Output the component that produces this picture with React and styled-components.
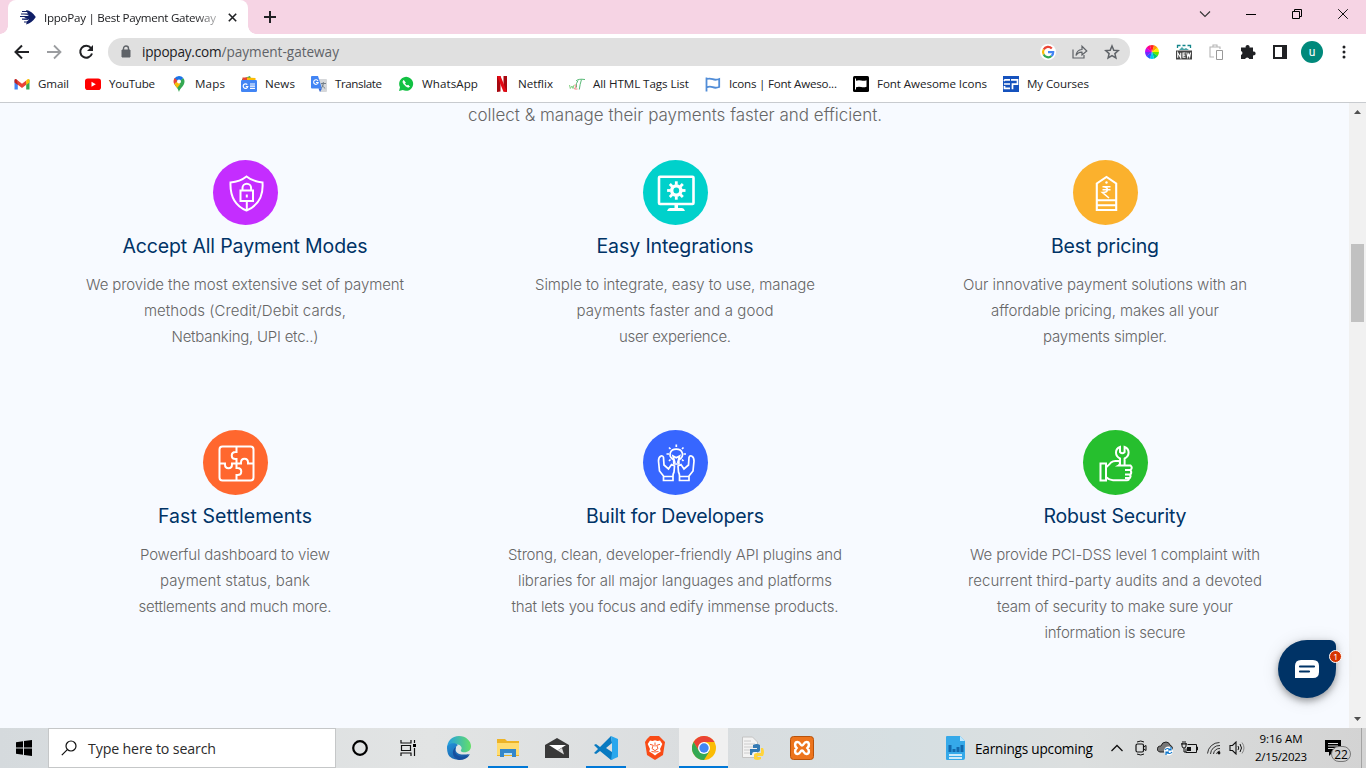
import React, { useLayoutEffect, useRef, useState } from 'react';
import styled, { createGlobalStyle, css } from 'styled-components';

const GlobalStyle = createGlobalStyle`
  * { box-sizing: border-box; }
  body { margin: 0; overflow: hidden; font-family: 'Open Sans', 'Noto Sans', sans-serif; }
  svg { display: block; flex: none; }
`;

/* A single line of text tracked so that it fills a known measure. */
const Line = styled.span`
  display: block;
  width: max-content;
  white-space: pre;
`;
function Fit({ w, children }) {
  const ref = useRef(null);
  const [spacing, setSpacing] = useState(0);
  useLayoutEffect(() => {
    const natural = ref.current.getBoundingClientRect().width;
    setSpacing((w - natural) / (children.length - 1));
  }, [w, children]);
  return <Line ref={ref} style={{ letterSpacing: spacing, marginRight: -spacing }}>{children}</Line>;
}

const Screen = styled.div`
  width: 1366px;
  height: 768px;
  display: flex;
  flex-direction: column;
  background: #fff;
`;

/* ---------- browser chrome ---------- */
const TabStrip = styled.header`
  height: 34px;
  flex: none;
  display: flex;
  background: #f6d4e4;
`;
const Tab = styled.div`
  position: relative;
  width: 240px;
  margin-left: 8px;
  padding: 0 8px 0 12px;
  display: flex;
  align-items: center;
  background: #fff;
  border-radius: 8px 8px 0 0;
  font-size: 11.6px;
  color: #3c4043;
  &::before, &::after {
    content: '';
    position: absolute;
    bottom: 0;
    width: 8px;
    height: 8px;
  }
  &::before { left: -8px; background: radial-gradient(circle at 0 0, transparent 7.5px, #fff 8px); }
  &::after { right: -8px; background: radial-gradient(circle at 100% 0, transparent 7.5px, #fff 8px); }
`;
const TabTitle = styled.div`
  width: 175px;
  flex: none;
  margin-left: 8px;
  overflow: hidden;
  color: #202124;
  mask-image: linear-gradient(90deg, #000 150px, rgba(0, 0, 0, 0.35) 172px);
`;
const TabClose = styled.div`
  width: 16px;
  flex: none;
  margin-left: 5px;
  display: flex;
  justify-content: center;
`;
const NewTab = styled.div`
  width: 44px;
  display: flex;
  align-items: center;
  justify-content: center;
`;
const WindowControls = styled.div`
  margin-left: auto;
  height: 28px;
  display: flex;
`;
const WindowButton = styled.div`
  width: 46px;
  display: flex;
  align-items: center;
  justify-content: center;
`;
const Toolbar = styled.nav`
  height: 35px;
  flex: none;
  padding: 0 6px;
  display: flex;
  align-items: center;
`;
const Slot = styled.div`
  width: 32px;
  height: 32px;
  flex: none;
  display: flex;
  align-items: center;
  justify-content: center;
`;
const Omnibox = styled.div`
  width: 1022px;
  height: 28px;
  margin: 0 6px;
  padding: 0 2px 0 13px;
  display: flex;
  align-items: center;
  border-radius: 14px;
  background: #e0e0e0;
`;
const Url = styled.div`
  display: flex;
  flex: 1;
  margin-left: 11px;
  font-size: 13.6px;
  color: #5f6368;
  b { font-weight: 400; color: #202124; }
`;
const Avatar = styled.div`
  width: 22px;
  height: 22px;
  border-radius: 50%;
  background: #00897b;
  color: #fff;
  font: 12px/22px Roboto, sans-serif;
  text-align: center;
`;
const BookmarksBar = styled.nav`
  height: 34px;
  flex: none;
  padding: 0 14px 4px;
  display: flex;
  align-items: center;
  gap: 16px;
  border-bottom: 1px solid #c8cbcf;
`;
const BookmarkItem = styled.div`
  display: flex;
  align-items: center;
  gap: 8px;
  font-size: 11.6px;
  line-height: 16px;
  color: #202124;
`;

/* ---------- page ---------- */
const Viewport = styled.main`
  position: relative;
  height: 625px;
  flex: none;
  display: flex;
`;
const Page = styled.section`
  width: 1349px;
  padding-left: 1px;
  overflow: hidden;
  background: #f7faff;
  font-family: Inter, 'Open Sans', sans-serif;
  font-weight: 300;
`;
const Intro = styled.div`
  height: 57px;
  display: flex;
  justify-content: center;
  font-size: 17px;
  line-height: 25px;
  color: #666;
`;
const FeatureRow = styled.div`
  width: ${(p) => p.$col * 3}px;
  height: 270px;
  margin: 0 auto;
  margin-left: ${(p) => (1350 - p.$col * 3) / 2 - 1}px;
  display: grid;
  grid-template-columns: repeat(3, 1fr);
`;
const Feature = styled.article`
  display: flex;
  flex-direction: column;
  align-items: center;
  font-size: 15px;
  line-height: 26px;
  color: #666;
`;
const Disc = styled.div`
  width: 65px;
  height: 65px;
  margin-left: 1px;
  display: flex;
  align-items: center;
  justify-content: center;
  border-radius: 50%;
  background: ${(p) => p.$color};
`;
const FeatureTitle = styled.h3`
  margin: 6px 0 11px;
  font-size: 19.5px;
  font-weight: 400;
  line-height: 30px;
  color: #003366;
`;
const Scrollbar = styled.div`
  width: 17px;
  padding: 7px 0 7px;
  display: flex;
  flex-direction: column;
  align-items: center;
  background: #f1f1f1;
`;
const Thumb = styled.div`
  width: 13px;
  height: 78px;
  margin-top: 130px;
  margin-bottom: auto;
  background: #c1c1c1;
`;
const Chat = styled.div`
  position: absolute;
  left: 1278px;
  top: 537px;
  width: 58px;
  height: 58px;
  display: flex;
  align-items: center;
  justify-content: center;
  border-radius: 50% 6px 50% 50%;
  background: #003366;
  box-shadow: 0 3px 7px rgba(0, 0, 0, 0.35), 0 2px 18px rgba(0, 0, 0, 0.12);
`;
const ChatBadge = styled.div`
  position: absolute;
  right: -6px;
  top: 10px;
  width: 13px;
  height: 13px;
  border: 1px solid #fff;
  border-radius: 50%;
  background: #d63500;
  color: #fff;
  font: 8px/12px Inter, sans-serif;
  text-align: center;
`;

/* ---------- taskbar ---------- */
const Taskbar = styled.footer`
  height: 40px;
  flex: none;
  display: flex;
  align-items: center;
  background: linear-gradient(90deg, #d5dadd 0, #e2e4e4 430px, #dadddf 700px, #d6dfe2 900px, #dcdfdf 1080px, #d3d3d3 1366px);
  color: #000;
`;
const TaskSlot = styled.div`
  width: ${(p) => p.$w || 49}px;
  height: 40px;
  flex: none;
  display: flex;
  align-items: center;
  justify-content: center;
  ${(p) => p.$open && css`
    background: linear-gradient(#0078d7, #0078d7) center bottom / ${p.$active ? 49 : 40}px 2px no-repeat
      ${p.$active ? ', #f0f0f0' : ''};
  `}
`;
const SearchBox = styled.div`
  width: 288px;
  height: 40px;
  padding-left: 12px;
  display: flex;
  align-items: center;
  gap: 11px;
  border: 1px solid #c5c7c8;
  background: #fff;
  font-size: 14.2px;
  color: #2b2b2b;
`;
const Apps = styled.div`
  display: flex;
  margin-left: 2px;
`;
const Weather = styled.div`
  margin-left: auto;
  width: 159px;
  display: flex;
  align-items: center;
  gap: 10px;
  font-size: 13.6px;
`;
const Clock = styled.div`
  width: 64px;
  display: flex;
  flex-direction: column;
  align-items: center;
  font-size: 11.5px;
  line-height: 18px;
`;
const Notice = styled.div`
  position: relative;
  width: 49px;
  height: 40px;
  padding: 12px 0 0 12px;
  border-right: 1px solid #a3a3a3;
  margin-right: 4px;
`;
const NoticeCount = styled.div`
  position: absolute;
  left: 18px;
  top: 18px;
  width: 20px;
  height: 16px;
  border: 1px solid #777;
  border-radius: 8px;
  background: #d1d1d1;
  font-size: 12px;
  font-weight: 500;
  line-height: 15px;
  display: flex;
  justify-content: center;
`;

/* ---------- icons ---------- */
const Svg = ({ s = 16, w = s, h = s, vb, children, ...rest }) => (
  <svg width={w} height={h} viewBox={vb || `0 0 ${w} ${h}`} fill="none" {...rest}>{children}</svg>
);

const icons = {
  gmail: <Svg><path d="M.5 3.500v10h3.300V7z" fill="#4285f4" /><path d="M15.500 3.500v10h-3.300V7z" fill="#34a853" /><path d="M3.800 4.500 8 7.800l4.200-3.300v4.300L8 12 3.800 8.800z" fill="#ea4335" /><path d="M12.200 4.500 13.500 3.300q2-.800 2 1.200V6.500l-3.300 2.400z" fill="#fbbc04" /><path d="M3.800 4.500 2.500 3.300q-2-.8-2 1.200V6.500l3.300 2.400z" fill="#c5221f" /></Svg>,
  youtube: <Svg><rect y="2.500" width="16" height="11.500" rx="2.800" fill="#f00" /><path d="m6.500 5.700 4.300 2.500-4.300 2.500z" fill="#fff" /></Svg>,
  maps: <Svg><path d="M8 0a5.500 5.500 0 0 1 4.300 2L6 9 3.300 2.500A6 6 0 0 1 8 0" fill="#1a73e8" /><path d="M3.700 2 6.500 4.400 3.500 8.500C2 6 2.300 3.800 3.700 2" fill="#ea4335" /><path d="m12.400 2.200-9 6.200C4.600 10.400 7 12 8 16c1-4 5.500-6 5.500-10.500 0-1.500-.4-2.500-1.100-3.300" fill="#34a853" /><path d="m3.400 8.300 3-3.300 3 3-3.200 4z" fill="#fbbc04" /><circle cx="8" cy="5.500" r="2" fill="#fff" /></Svg>,
  news: <Svg><path d="M1 3 9 0l2 5H1z" fill="#34a853" /><path d="M1.500 1.500h6V6h-6z" fill="#ea4335" /><path d="M6 1.500 14.500 2v4H6z" fill="#fbbc04" /><rect y="4" width="16" height="12" rx="1.200" fill="#4285f4" /><path d="M6.300 8.600A2.300 2.300 0 1 0 6.800 10.500H4.800M9 8h5M9 10.200h5M9 12.400h5" stroke="#fff" strokeWidth="1.200" /></Svg>,
  translate: <Svg><path d="M6 3h9q1 0 1 1v11q0 1-1 1H9z" fill="#d5d7da" /><path d="M1 0h6l4 12.500H1q-1 0-1-1V1q0-1 1-1" fill="#4285f4" /><path d="m7.500 12.500 1.500 3.500 2-3.500z" fill="#3367d6" /><path d="M7 5A2.300 2.300 0 1 0 7.200 6.500H5" stroke="#fff" strokeWidth="1.100" /><path d="M10 7.500h5M12.300 6v1.500c0 2-1 3.500-2 4.500M11 8.500c.5 1.500 1.800 3 3.200 4" stroke="#747f89" /></Svg>,
  whatsapp: <Svg><path d="M1 15 2 11.200A7 7 0 1 1 4.800 14z" fill="#12c143" /><path d="M5.700 4.300c-1.500 1-.6 3.200 1.200 5s3.700 2.500 4.700 1.300l-1.500-1.500-1.100.7c-.9-.3-1.900-1.300-2.200-2.200l.6-1z" fill="#fff" stroke="#fff" strokeWidth=".7" /></Svg>,
  netflix: <Svg><path d="M3 0h3.500v15.500L3 16zM9.500 0H13v16l-3.500-.5z" fill="#a7070f" /><path d="M3 0h3.500L13 16l-3.600-.5z" fill="#e50914" /></Svg>,
  tags: <Svg><path d="M7 5Q9 2.500 16 3.500M12.500 3.500Q11 8 10.300 13.500M9 4.500q-2.500 3-1.500 7" stroke="#59b977" /><path d="m.5 9 .8 3.500L3 10l1 2.500L5 9" stroke="#7c7" strokeWidth=".9" /><path d="M5.500 9q3-1 0 4h3" stroke="#e66" strokeWidth=".8" /></Svg>,
  flag: <Svg><path d="M1.500 1.500v14M1.500 3q3.200-1 6.200.200t6.500-.2V11q-3.500 1.400-6.500.2t-6.200.2" stroke="#528dd7" strokeWidth="1.800" /></Svg>,
  faBlack: <Svg><rect width="16" height="16" rx="1.500" fill="#000" /><path d="M2 2.500v11h1V11.200q2.700-1 5.200-.2t5.300-.2V4.300q-2.700 1-5.300.2T3 4.700V2.500z" fill="#fff" /></Svg>,
  courses: <Svg><path d="M0 0h16v16H0z" fill="#1552bd" /><path d="M7 3.800H2L1 5M1 8h6M7 12.300H1.500V10M8 3.800h6.500v4.400H9.500v5.100" stroke="#fff" strokeWidth="1.700" /></Svg>,
};

const bookmarks = [
  ['gmail', 'Gmail', 31], ['youtube', 'YouTube', 46], ['maps', 'Maps', 30], ['news', 'News', 30],
  ['translate', 'Translate', 47], ['whatsapp', 'WhatsApp', 56], ['netflix', 'Netflix', 35],
  ['tags', 'All HTML Tags List', 96], ['flag', 'Icons | Font Aweso...', 108],
  ['faBlack', 'Font Awesome Icons', 110], ['courses', 'My Courses', 62],
];

const White = ({ children, sw = 2 }) => (
  <Svg s={38} stroke="#fff" strokeWidth={sw}>{children}</Svg>
);

const GEAR = Array.from({ length: 8 }, (_, i) => i * 45);

const features = [
  [
    { color: '#c42dff', title: ['Accept All Payment Modes', 245], icon: (
      <White><path d="M19.500 2.500C14.500 6.500 9 8 3.500 8.500c-.5 13 4 23 16 28 12-5 17-15 16-28C30 8 24.500 6.500 19.500 2.500z" /><path d="M13.500 16.500h12.500v10.500H13.500zM15.500 16v-2a4.300 4.300 0 0 1 8.600 0v2M19.800 27v9" /><path d="M18.800 20.500h2v3h-2z" fill="#fff" stroke="none" /></White>),
      lines: [['We provide the most extensive set of payment', 318], ['methods (Credit/Debit cards,', 202], ['Netbanking, UPI etc..)', 147]] },
    { color: '#00d1cb', title: ['Easy Integrations', 157], icon: (
      <White sw={2.600}><rect x="2" y="2.800" width="34.500" height="27.200" rx="1" /><path d="M10 37q1-3 3-3h12q2 0 3 3z" fill="#fff" stroke="none" /><path d="M17.500 30h3.500v5h-3.500z" fill="#fff" stroke="none" /><circle cx="19.300" cy="16.500" r="4.600" strokeWidth="3.400" />{GEAR.map((a) => <path key={a} d="M19.300 7.300v3.500" transform={`rotate(${a} 19.300 16.500)`} strokeWidth="2.800" />)}</White>),
      lines: [['Simple to integrate, easy to use, manage', 280], ['payments faster and a good', 197], ['user experience.', 112]] },
    { color: '#fbb12d', title: ['Best pricing', 108], icon: (
      <White sw={2.100}><path d="M9.800 36V9.500L19.500 3l9.700 6.500V36zM9.500 26.300H29M9.500 31.300H29" /><circle cx="19.500" cy="8.500" r="1.200" fill="#fff" stroke="none" /><path d="M15.500 12.800h8M15.500 15.800h8M15.500 12.800c6.500-.5 6.500 5.700 0 5.700l6.500 5.500" strokeWidth="1.600" /></White>),
      lines: [['Our innovative payment solutions with an', 284], ['affordable pricing, makes all your', 228], ['payments simpler.', 124]] },
  ],
  [
    { color: '#ff672e', title: ['Fast Settlements', 154], icon: (
      <White><rect x="2.500" y="2.500" width="34" height="34" rx="3" /><path d="M19.500 2.500v5.500h-1c-5 0-5 7 0 7h1v5M2.500 19.500H8v1c0 5 7 5 7 0v-1h9v-1c0-5 7-5 7 0v1h5.500M19.500 20v4h1c5 0 5 7 0 7h-1v5.500" /></White>),
      lines: [['Powerful dashboard to view', 190], ['payment status, bank', 150], ['settlements and much more.', 193]] },
    { color: '#3766ff', title: ['Built for Developers', 178], icon: (
      <White sw={1.700}><path d="M4 12q-2.500 1-2.500 5l1 10 4 5v4.500h9.500V32q0-2 1-4l.5-6-3-1.500-3 4.500-4.500-4-.5-7.500q-.5-2-2.500-1.500zM34.500 12q2.500 1 2.500 5l-1 10-4 5v4.500h-9.500V32q0-2-1-4l-.5-6 3-1.500 3 4.500 4.500-4 .5-7.500q.5-2 2.500-1.500zM6.500 32.500h9.500M22.500 32.500H32" /><path d="M16.700 20v-4c-6.500-4-3.500-10.800 2.600-10.800s9 6.800 2.600 10.800v4zM18 19l-2-7 3.300 1.800L22.600 12l-2 7" /><path d="M19.300.5v2.500M12 3.500l1.500 1.500M26.500 3.500 25 5M9.500 10H12M26.500 10H29M12 17l1.500-1.500M26.500 17 25 15.500" /></White>),
      lines: [['Strong, clean, developer-friendly API plugins and', 334], ['libraries for all major languages and platforms', 314], ['that lets you focus and edify immense products.', 327]] },
    { color: '#26bf2e', title: ['Robust Security', 143], icon: (
      <White sw={2}><path d="M3.500 19.500h5.500v17H3.500zM9.500 23q2.500-2 4.500-4.500 2.500-2 5.500-1.500h3q1.500 3-1 4.500H33.500q2.500 2.200 0 4.500H28M33.500 26q1.500 2.200 0 4.500H28M32.800 30.500q1.500 1.800 0 3.500H28M32 34q0 2.200-2 2.200H16Q12 36 9.500 33.500" /><path d="M23 21.500v-7q-4-2-4-6t4-5.500v5q2.300 2.500 4.600 0V3q4 1.500 4 5.500t-4 6v7" /></White>),
      lines: [['We provide PCI-DSS level 1 complaint with', 290], ['recurrent third-party audits and a devoted', 294], ['team of security to make sure your', 236], ['information is secure', 141]] },
  ],
];

const WHEEL = ['#f22', '#ff9d00', '#ffed00', '#62e900', '#00c870', '#00c9ef', '#205fff', '#7128ff', '#c40bef', '#ff008b'];

function BrowserChrome() {
  return (
    <>
      <TabStrip>
        <Tab>
          <Svg><path d="M6 1q6 1 9.800 7Q12 14 6 15.500l1-3 2-2H3l5-1.500H4l5-3-5-1h4z" fill="#101f67" /><path d="M2 2.500h6M1 5h7M0 7.500h8M2 10.200h6M4 13h6" stroke="#101f67" strokeWidth="1.200" /></Svg>
          <TabTitle><Fit w={172}>IppoPay | Best Payment Gateway</Fit></TabTitle>
          <TabClose><Svg s={9}><path d="m.8.800 7.400 7.400M8.200.800.8 8.200" stroke="#202124" strokeWidth="1.600" /></Svg></TabClose>
        </Tab>
        <NewTab><Svg s={12}><path d="M6 0v12M0 6h12" stroke="#202124" strokeWidth="2" /></Svg></NewTab>
        <WindowControls>
          <WindowButton><Svg w={12} h={8}><path d="m1 1.500 5 5 5-5" stroke="#333" strokeWidth="1.100" /></Svg></WindowButton>
          <WindowButton><Svg w={10} h={2}><path d="M0 1.500h10" stroke="#000" strokeWidth="1" /></Svg></WindowButton>
          <WindowButton><Svg s={10}><path d="M.5 2.500h7v7h-7zM2.500 2.500v-2h7v7h-2" stroke="#000" /></Svg></WindowButton>
          <WindowButton><Svg s={10}><path d="m.2.200 9.600 9.600M9.800.2.2 9.800" stroke="#111" /></Svg></WindowButton>
        </WindowControls>
      </TabStrip>
      <Toolbar>
        <Slot><Svg><path d="M15 8H2M8 1.500 1.500 8 8 14.500" stroke="#202124" strokeWidth="2" /></Svg></Slot>
        <Slot><Svg><path d="M1 8h13M8 1.500 14.500 8 8 14.500" stroke="#9b9da0" strokeWidth="1.800" /></Svg></Slot>
        <Slot><Svg><path d="M13 4A6 6 0 1 0 14 9.500" stroke="#202124" strokeWidth="2" /><path d="M15 1v6H9z" fill="#202124" /></Svg></Slot>
        <Omnibox>
          <Svg w={10} h={13}><path d="M1 5h8v7H1z" fill="#5f6368" stroke="#5f6368" strokeLinejoin="round" /><path d="M2.500 5V3.500a2.500 2.500 0 0 1 5 0V5" stroke="#5f6368" strokeWidth="1.400" /></Svg>
          <Url><b><Fit w={79.500}>ippopay.com</Fit></b><Fit w={117.500}>/payment-gateway</Fit></Url>
          <Slot><Svg><circle cx="8" cy="8" r="8" fill="#fff" /><g strokeWidth="2.200"><path d="M11.800 4.500A5 5 0 0 0 3.700 5.500" stroke="#ea4335" /><path d="M3.700 5.500a5 5 0 0 0 0 5" stroke="#fbbc04" /><path d="M3.700 10.500a5 5 0 0 0 7.800 1.500" stroke="#34a853" /><path d="M11.500 12A4.800 4.800 0 0 0 13.200 8.200H8" stroke="#4285f4" /></g></Svg></Slot>
          <Slot><Svg><path d="M1 5.500V14h11v-3" stroke="#5f6368" strokeWidth="1.200" /><path d="M4 11.500q.5-5.500 6-6V2.300L14.800 7 10 11V8.200q-4-.2-6 3.300z" stroke="#5f6368" strokeWidth="1.200" /></Svg></Slot>
          <Slot><Svg><path d="m8 2 1.800 4.200 4.500.400-3.400 3 1 4.400L8 11.700 4.100 14l1-4.400-3.400-3 4.500-.4z" stroke="#5f6368" strokeWidth="1.500" /></Svg></Slot>
        </Omnibox>
        <Slot><Svg s={14} vb="-7 -7 14 14">{WHEEL.map((c, i) => <path key={c} d="M0 0-2.200-6.600A7 7 0 0 1 2.200-6.600z" fill={c} transform={`rotate(${i * 36})`} />)}</Svg></Slot>
        <Slot><Svg><path d="M1.500 4V1.500h3M6.500 1.500h3M11.500 1.500h3V4" stroke="#13858a" strokeWidth="1.300" /><path d="M3 6l3-3 2 2 2-1 3 2z" fill="#4ba5a8" /><path d="M0 6.500h16v9H0z" fill="#444" /><path d="M1.700 13.700v-5l3 5v-5M9.500 9H7v4.300h2.500M7 11.100h2.300M10.800 8.500l.9 4.500 1-3 1 3 .9-4.500" stroke="#fff" strokeWidth="1.100" /></Svg></Slot>
        <Slot><Svg><path d="M6 13H2V3h10v2M5 3V1h4v2" stroke="#b5b5b5" strokeWidth="1.100" /><path d="M8.500 6.500h6v9h-6z" stroke="#999" /></Svg></Slot>
        <Slot><Svg><path d="M1 3.500h4.700a2 2 0 1 1 3.800 0H13v4a2 2 0 1 1 0 3.800V15H9.300a2.200 2.200 0 0 0-4.200 0H1v-4a2.100 2.100 0 0 0 0-4z" fill="#202124" /></Svg></Slot>
        <Slot><Svg s={14}><path d="M1 1h12v12H1z" stroke="#202124" strokeWidth="2" /><path d="M9 1h4v12H9z" fill="#202124" /></Svg></Slot>
        <Slot><Avatar>u</Avatar></Slot>
        <Slot><Svg w={4} h={14}><circle cx="2" cy="2" r="1.500" fill="#202124" /><circle cx="2" cy="7" r="1.500" fill="#202124" /><circle cx="2" cy="12" r="1.500" fill="#202124" /></Svg></Slot>
      </Toolbar>
      <BookmarksBar>
        {bookmarks.map(([icon, label, w]) => (
          <BookmarkItem key={label}>{icons[icon]}<Fit w={w}>{label}</Fit></BookmarkItem>
        ))}
      </BookmarksBar>
    </>
  );
}

function TaskbarView() {
  return (
    <Taskbar>
      <TaskSlot $w={48}><Svg><path d="M0 2.200 7 1.200V7.500H0zM8 1l8-1v7.500H8zM0 8.500h7v6.300l-7-1zM8 8.500h8V16l-8-1z" fill="#000" /></Svg></TaskSlot>
      <SearchBox>
        <Svg><circle cx="10" cy="6" r="5" stroke="#111" strokeWidth="1.200" /><path d="M6.300 9.700.8 15.200" stroke="#111" strokeWidth="1.200" /></Svg>
        <Fit w={128}>Type here to search</Fit>
      </SearchBox>
      <TaskSlot $w={48}><Svg s={16}><circle cx="8" cy="8" r="6.800" stroke="#000" strokeWidth="2.200" /></Svg></TaskSlot>
      <TaskSlot $w={48}><Svg w={17} h={16}><path d="M1 0v3h10V0M1.500 5.500h9v5h-9zM1 16v-3h10v3M14.500 0v3M14.500 8v8" stroke="#111" strokeWidth="1.200" /><path d="M13 4h3v3h-3z" fill="#000" /></Svg></TaskSlot>
      <Apps>
        <TaskSlot><Svg s={24}>
          <defs>
            <linearGradient id="edgeTop" x1="0" x2="1"><stop stopColor="#239de5" /><stop offset="1" stopColor="#64df68" /></linearGradient>
            <linearGradient id="edgeLow" x1="0" y1="0" x2="1" y2="1"><stop stopColor="#2594da" /><stop offset="1" stopColor="#154c98" /></linearGradient>
          </defs>
          <path d="M0 13C0 5 5 0 12 0s12 5 12 10c0 5-4 7-9 6-2-1-1-2-.500-3 1-3-4-6-8-4S1 12 0 13z" fill="url(#edgeTop)" />
          <path d="M0 12C0 7 8 6 11 9c-5 3-3 12 11 9-5 8-18 7-21 0Q0 15 0 12z" fill="url(#edgeLow)" />
          <path d="M9 11q-3 7 4 9.500 5 1.500 10-2.500-3 6-11 6C5 22 4 14 9 11z" fill="#164f9f" /></Svg></TaskSlot>
        <TaskSlot $open><Svg w={22} h={20}><path d="M0 1h8l2 2h12v15H0z" fill="#edb326" /><path d="M0 5h22v12H0z" fill="#ffdc70" /><path d="M3 19v-8h16v8h-4v-4H7v4z" fill="#3487ca" /><path d="M7 15h8v2H7z" fill="#b5e0fa" /></Svg></TaskSlot>
        <TaskSlot><Svg w={24} h={20}><path d="m0 7 12-7 12 7v13H0z" fill="#393939" /><path d="M4 7h17l-8.500 5.500z" fill="#fff" /><path d="m12.500 12.500 6.500 4-2-6.500z" fill="#ddd" /></Svg></TaskSlot>
        <TaskSlot $open><Svg s={24}><path d="M17 0 6 11 2 8 0 9l4 4-4 4 2 1 4-3 11 9 2-1-1-7-6-4 6-5z" fill="#087ac1" /><path d="m17 0 7 3v18l-7 3 1-7V7z" fill="#2aa7ed" /></Svg></TaskSlot>
        <TaskSlot><Svg w={20} h={24}><path d="m5 0-3 3-2 3 2 13 8 5 8-5 2-13-3-3-3-3z" fill="#f94b16" /><path d="m5 4.500 2.500.500 2.500-.7 2.500.7 2.500-.5L17.300 8l-2.300 5 .8 2.500-3.300 2L10 19.500l-2.500-2-3.300-2L5 13 2.700 8z" fill="#fff" /><path d="m5 8.300 3.300 1L7 12.500l3 2.200 3-2.200-1.300-3.200 3.300-1M10 6.500v4M6.500 15.500l3.500.5 3.500-.5" stroke="#f94b16" strokeWidth=".9" /></Svg></TaskSlot>
        <TaskSlot $open $active><Svg s={24}><circle cx="12" cy="12" r="12" fill="#fbbc04" /><path d="M1.600 6A12 12 0 0 1 22.400 6H12L7 15z" fill="#ea4335" /><path d="M1.600 6A12 12 0 0 0 12 24l5.500-9L12 12l-5 3z" fill="#34a853" /><circle cx="12" cy="12" r="6" fill="#fff" /><circle cx="12" cy="12" r="4.700" fill="#4285f4" /></Svg></TaskSlot>
        <TaskSlot><Svg w={22} h={24}><path d="M.5 1h10l5 5v15.500H.5z" fill="#f3f3f3" stroke="#c4c4c4" /><path d="M2 5h7M2 8h11M2 11h11M2 14h8M2 17h7" stroke="#ccc" /><path d="M11 12V9q4-2 7 0v5q0 2-3 2h-3q-2 0-2 3H8v-6h7v-1z" fill="#347ab4" /><path d="M19 12h2q2 4 0 8h-6v1h4v2q-4 2-7 0v-4q0-2 3-2h4z" fill="#ffd43b" /></Svg></TaskSlot>
        <TaskSlot><Svg s={24}><rect x=".5" y=".5" width="23" height="23" rx="3" fill="#ed741c" stroke="#b8520a" /><path d="M7.500 6c-3 0-3 4-1 6-2 2-2 6 1 6s2.500-3.500 4.500-3.500 1.500 3.500 4.500 3.500 3-4 1-6c2-2 2-6-1-6s-2.500 3.500-4.500 3.500S10.500 6 7.500 6z" stroke="#fff" strokeWidth="2.500" /></Svg></TaskSlot>
      </Apps>
      <Weather>
        <Svg w={19} h={24}><path d="M1 0h13l5 5v17q0 2-2 2H1q-1 0-1-1V1q0-1 1-1" fill="#35a9e9" /><path d="M14 0v5h5z" fill="#bde8ff" /><path d="M4 9v7M8 13v3M12 11v5M16 9v7" stroke="#1269ad" strokeWidth="3" /><path d="M3 19h13M3 22h13" stroke="#fff" strokeWidth="1.400" /></Svg>
        <Fit w={118}>Earnings upcoming</Fit>
      </Weather>
      <TaskSlot $w={24}><Svg w={12} h={8}><path d="m.5 7 5.500-5.500L11.500 7" stroke="#111" strokeWidth="1.300" /></Svg></TaskSlot>
      <TaskSlot $w={24}><Svg w={12} h={16}><path d="M2 2q4-2 7 0M2 14q4 2 7 0" stroke="#111" /><rect x="1" y="4" width="7.500" height="8" rx="1.500" stroke="#111" strokeWidth="1.200" /><path d="m8.500 7 2.500-1.500v5L8.500 9" stroke="#111" /></Svg></TaskSlot>
      <TaskSlot $w={24}><Svg><path d="M3 12Q-1 11 1 7q1-1 3-1 1-4 5-4 3 0 4 3 3 1 2.500 5L12 12z" fill="#777" stroke="#222" /><circle cx="11.500" cy="11" r="4.500" fill="#fff" /><path d="M8 10q2-3 6 0M14 7v3h-3M15 12q-2 3-6 0M9 15v-3h3" stroke="#0873c9" strokeWidth="1.200" /></Svg></TaskSlot>
      <TaskSlot $w={25}><Svg w={17} h={14}><path d="M6.500 3.500h9v8H5v-4M15.500 6h1v3h-1M1 2v3q0 2 2 2t2-2V2M0 3h6M2 0v3M4 0v3M3 7v4h2" stroke="#111" /><path d="M6 6h4v4H6z" fill="#111" /></Svg></TaskSlot>
      <TaskSlot $w={24}><Svg w={14} h={14}><path d="M.5 12.500a12 12 0 0 1 12-11M3.500 13A9 9 0 0 1 13 4.500M6.500 13A6 6 0 0 1 13 7.500M9.500 13q.5-2.500 3.500-3" stroke="#333" /><circle cx="12" cy="12" r="1.400" fill="#111" /></Svg></TaskSlot>
      <TaskSlot $w={23}><Svg w={17} h={14}><path d="M1 4.500h2.500L7 1v12L3.500 9.500H1z" stroke="#111" strokeWidth="1.100" /><path d="M9 5q1.500 2 0 4M11 3q3 4 0 8" stroke="#111" /><path d="M13 1.500q4 5.500 0 11" stroke="#888" /></Svg></TaskSlot>
      <Clock><Fit w={43}>9:16 AM</Fit><Fit w={52}>2/15/2023</Fit></Clock>
      <Notice>
        <Svg w={17} h={16}><path d="M0 0h16v12H8l-4 4v-4H0z" fill="#000" /><path d="M3 3.500h10M3 6h10M3 8.500h6" stroke="#ddd" /></Svg>
        <NoticeCount>22</NoticeCount>
      </Notice>
    </Taskbar>
  );
}

export default function App() {
  return (
    <Screen>
      <GlobalStyle />
      <BrowserChrome />
      <Viewport>
        <Page>
          <Intro><Fit w={414}>{'collect & manage their payments faster and efficient.'}</Fit></Intro>
          {features.map((row, i) => (
            <FeatureRow key={i} $col={i ? 440 : 430}>
              {row.map((f) => (
                <Feature key={f.title[0]}>
                  <Disc $color={f.color}>{f.icon}</Disc>
                  <FeatureTitle><Fit w={f.title[1]}>{f.title[0]}</Fit></FeatureTitle>
                  {f.lines.map(([text, w]) => <Fit key={text} w={w}>{text}</Fit>)}
                </Feature>
              ))}
            </FeatureRow>
          ))}
        </Page>
        <Scrollbar>
          <Svg w={7} h={4}><path d="M0 4 3.500 0 7 4z" fill="#505050" /></Svg>
          <Thumb />
          <Svg w={7} h={4}><path d="m0 0 3.500 4L7 0z" fill="#505050" /></Svg>
        </Scrollbar>
        <Chat>
          <Svg w={24} h={18}><path d="M6 0h12q6 0 6 6v6q0 6-6 6H0V6q0-6 6-6" fill="#fff" /><path d="M5 6.500h14M5 11.500h9" stroke="#003366" strokeWidth="2.200" strokeLinecap="round" /></Svg>
          <ChatBadge>1</ChatBadge>
        </Chat>
      </Viewport>
      <TaskbarView />
    </Screen>
  );
}
